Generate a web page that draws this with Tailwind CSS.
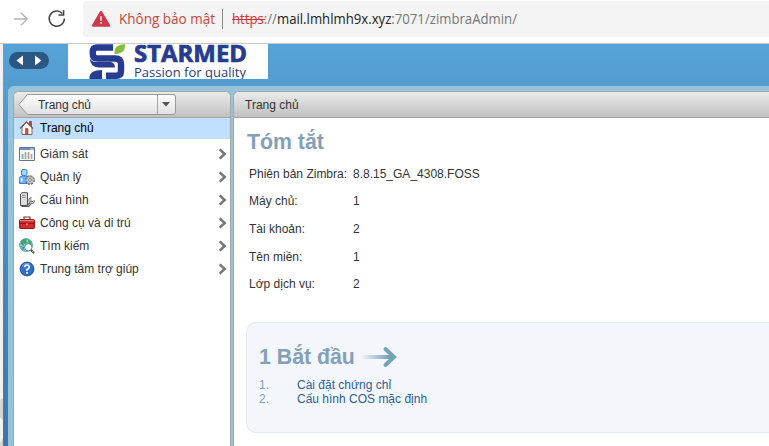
<!DOCTYPE html>
<html lang="vi">
<head>
<meta charset="utf-8">
<title>Zimbra Admin</title>
<script src="https://cdn.jsdelivr.net/npm/@tailwindcss/browser@4"></script>
</head>
<body class="w-[769px] h-[446px] overflow-hidden bg-white font-['Liberation_Sans',Arial,sans-serif] text-[12px] leading-[14px] text-[#333]">
<div class="flex h-[446px] flex-col overflow-hidden">
  <!-- Browser toolbar -->
  <header class="flex h-[44px] shrink-0 items-start border-b border-[#c9c9c9] bg-white">
    <svg class="mt-[9px] ml-[13px] h-5 w-5 shrink-0" viewBox="0 0 20 20" fill="none" stroke="#b3b3b3" stroke-width="1.3"><path d="M1 10H14.2M8 3.8L14.3 10L8 16.2"/></svg>
    <svg class="mt-[9px] ml-[14px] h-5 w-5 shrink-0" viewBox="0 0 20 20" fill="none" stroke="#444" stroke-width="1.5"><path d="M15.3 4.4A7.6 7.6 0 1 0 17.4 9.6M16.6 1V6H11.4"/></svg>
    <div class="mt-px ml-[16px] flex h-[36px] flex-1 items-center rounded-l bg-[#f4f4f4] font-['Open_Sans','Noto_Sans',sans-serif] text-[14px] leading-5 whitespace-nowrap">
      <svg class="ml-[8px] h-[18px] w-5 shrink-0" viewBox="0 0 20 18"><path d="M10 2L18 15.6H2Z" fill="#d0394b" stroke="#d0394b" stroke-width="2.4" stroke-linejoin="round"/><path d="M10 6.2V10.8M10 12.1V13.7" stroke="#fff" stroke-width="1.4"/></svg>
      <svg class="ml-[8px] h-[36px] w-[410px] shrink-0" viewBox="0 0 410 36" font-size="14.5">
        <text x="0" y="23" fill="#c74634" textLength="96" lengthAdjust="spacingAndGlyphs">Không bảo mật</text>
        <path d="M103.500 8V28" stroke="#8a8a8a"/>
        <text x="113" y="23" fill="#767676" textLength="285" lengthAdjust="spacingAndGlyphs"><tspan fill="#d13438">https</tspan>://<tspan fill="#222">mail.lmhlmh9x.xyz</tspan>:7071/zimbraAdmin/</text>
        <path d="M113 18.500H146" stroke="#d13438" stroke-width="1.2"/>
      </svg>
    </div>
  </header>

  <div class="flex min-h-0 flex-1">
    <div class="w-[3px] shrink-0 overflow-hidden bg-[#f1f1f1] pt-[353px]"><div class="h-[24px] w-[10px] -translate-x-px rounded-l-lg bg-[#d4d4d4]"></div><div class="mt-[16px] h-5 w-[10px] rounded-tl-lg bg-[#d4d4d4]"></div></div>
    <div class="flex min-w-0 flex-1 flex-col bg-linear-to-b from-[#56a3d6] to-[#4174a5]">
      <!-- Banner -->
      <div class="flex h-[42px] shrink-0 items-start bg-linear-to-b from-[#56a3d6] to-[#549cd0]">
        <div class="mt-[8px] ml-[6px] flex h-[17px] w-[40px] shrink-0 items-center justify-between rounded-full bg-[#2b5784] px-[7px]">
          <svg class="h-[11px] w-[7px]" viewBox="0 0 7 11"><path d="M7 .5V10.5L.5 5.5Z" fill="#fff"/></svg>
          <svg class="h-[11px] w-[7px]" viewBox="0 0 7 11"><path d="M0 .5V10.5L6.5 5.5Z" fill="#fff"/></svg>
        </div>
        <div class="ml-[19px] flex h-[35px] w-[200px] shrink-0 bg-white">
          <svg class="h-[35px] w-[66px] shrink-0" viewBox="0 0 66 35">
            <path d="M45 3.500H29Q24.800 3.500 24.800 8V10Q24.800 14.500 29.500 14.500H47Q53 14.500 53 20V27Q53 31.800 48 31.800H38" fill="none" stroke="#273c91" stroke-width="6.400"/>
            <path d="M21.600 13Q22 18 29 18H43Q47 19 47 23.500H31Q21.600 23 21.600 13Z" fill="#273c91"/>
            <path d="M34 26V35H21.500V33Q22 26 34 26Z" fill="#273c91"/>
            <path d="M57 .2V2Q57 10 46.500 10V8Q46.500 .2 57 .2Z" fill="#85be3c"/>
          </svg>
          <div class="flex flex-col whitespace-nowrap">
            <svg class="h-[20px] w-[116px] shrink-0" viewBox="0 0 116 20"><text x="0" y="17.500" font-family="Open Sans" font-weight="700" font-size="22.500" fill="#273c91" stroke="#273c91" stroke-width=".7" textLength="113" lengthAdjust="spacingAndGlyphs">STARMED</text></svg>
            <svg class="h-[15px] w-[116px] shrink-0" viewBox="0 0 116 15"><text x="0" y="12.500" font-family="Open Sans" font-size="12.500" fill="#303a80" textLength="112" lengthAdjust="spacingAndGlyphs">Passion for quality</text></svg>
          </div>
        </div>
      </div>

      <!-- Workspace -->
      <main class="ml-[5px] flex min-h-0 flex-1 gap-[2px] rounded-tl-md bg-[#98c4d9] pt-[5px] pl-[5px]">
        <nav class="w-[218px] shrink-0 overflow-hidden rounded-t-md border border-b-0 border-[#a5a5a5] bg-white">
          <div class="flex h-[26px] border-b border-[#a5a5a5] bg-linear-to-b from-[#ebebeb] to-[#c1c1c1]">
            <svg class="mt-[2px] ml-[4px] h-[22px] w-[159px]" viewBox="0 0 159 22">
              <defs><linearGradient id="button" x2="0" y2="1"><stop stop-color="#fff"/><stop offset="1" stop-color="#e0e0e0"/></linearGradient></defs>
              <path d="M.8 10.5L9.5 .5H155Q157.500 .5 157.500 3V18Q157.500 20.500 155 20.500H9.500Z" fill="url(#button)" stroke="#999"/>
              <path d="M139.500 1V20" stroke="#a5a5a5"/><path d="M144 8H152L148 12.500Z" fill="#555"/>
              <text x="20" y="15" font-size="12" fill="#333" textLength="53">Trang chủ</text>
            </svg>
          </div>
          <div class="flex h-[21px] items-center bg-[#c1dfff] pb-px pl-[5px] text-black">
            <svg class="h-4 w-4" viewBox="0 0 16 16"><path d="M10.500 1.500H12.500V6L10.500 4Z" fill="#c33b2c" stroke="#8b3c2c" stroke-width=".7"/><path d="M3 7V14.500H13V7L7.500 2Z" fill="#fff" stroke="#7d685a"/><path d="M1 8.500L7.500 2L14 8.500" fill="none" stroke="#795d4d" stroke-width="1.300"/><path d="M6.500 8.500H9V14.500H6.500Z" fill="#d34a3c" stroke="#84453b" stroke-width=".6"/></svg>
            <span class="ml-[5px]">Trang chủ</span>
          </div>
          <ul class="pt-[3px]">
            <li class="flex h-[23px] items-center pl-[5px]">
              <svg class="h-4 w-4" viewBox="0 0 16 16"><path d="M.5 1.500H15.500V14.500H.5Z" fill="#f5f8fb" stroke="#5a7595"/><path d="M1 2H15V4H1Z" fill="#6d90b8"/><path d="M11.500 3H14.500" stroke="#dce8f5"/><path d="M3.500 13V8" stroke="#8eb88f" stroke-width="2"/><path d="M6.500 13V6" stroke="#8cb0d6" stroke-width="1.700"/><path d="M9.500 13V6" stroke="#d29a78" stroke-width="1.700"/><path d="M12.500 13V8" stroke="#a6adc8" stroke-width="1.700"/></svg>
              <span class="ml-[5px] flex-1">Giám sát</span><svg class="mr-[3px] h-3 w-[9px]" viewBox="0 0 9 12"><path d="M1.700 1.300L6.700 6L1.700 10.700" fill="none" stroke="#777" stroke-width="2.500"/></svg>
            </li>
            <li class="flex h-[23px] items-center pl-[5px]">
              <svg class="h-4 w-4" viewBox="0 0 16 16"><rect x="2.500" y=".5" width="5.500" height="6" rx="1.500" fill="#a3d8ff" stroke="#2f82d4"/><path d="M.5 14.500V9.500Q.5 7 3 7H7Q9.500 7 9.500 9.500V14.500Z" fill="#6ab8fb" stroke="#2f82d4"/><path d="M2.500 9V12.500" stroke="#d8f1ff" stroke-width="1.800"/><circle cx="11" cy="11" r="4.200" fill="#ddd" stroke="#666" stroke-width="1.300" stroke-dasharray="2.100 1.200"/><circle cx="11" cy="11" r="3.300" fill="#ddd" stroke="#888" stroke-width=".7"/><circle cx="11" cy="11" r="1.400" fill="#fff" stroke="#555" stroke-width=".8"/></svg>
              <span class="ml-[5px] flex-1">Quản lý</span><svg class="mr-[3px] h-3 w-[9px]" viewBox="0 0 9 12"><path d="M1.700 1.300L6.700 6L1.700 10.700" fill="none" stroke="#777" stroke-width="2.500"/></svg>
            </li>
            <li class="flex h-[23px] items-center pl-[5px]">
              <svg class="h-4 w-4" viewBox="0 0 16 16"><path d="M1.500 2L3 .7H8.500V12.500L7 13.500H1.500Z" fill="#ddd" stroke="#4f4f4f"/><path d="M3 3.500H6.500M3 5.500H6.500" stroke="#8a8a8a"/><path d="M2.500 14.500H8" stroke="#555"/><path d="M9 13.800L12.500 10" stroke="#555" stroke-width="2.900" stroke-linecap="round"/><path d="M15 8.300A2.300 2.300 0 1 1 12.700 6.200" fill="none" stroke="#666" stroke-width="2"/><path d="M9 13.800L12.500 10M14.900 8.500A2.200 2.200 0 1 1 12.600 6.400" fill="none" stroke="#ddd" stroke-width=".9" stroke-linecap="round"/></svg>
              <span class="ml-[5px] flex-1">Cấu hình</span><svg class="mr-[3px] h-3 w-[9px]" viewBox="0 0 9 12"><path d="M1.700 1.300L6.700 6L1.700 10.700" fill="none" stroke="#777" stroke-width="2.500"/></svg>
            </li>
            <li class="flex h-[23px] items-center pl-[5px]">
              <svg class="h-4 w-4" viewBox="0 0 16 16"><path d="M5 4.500V2H11V4.500" fill="none" stroke="#574545" stroke-width="1.200"/><rect x=".5" y="4.500" width="15" height="9" rx="1" fill="#d42b2b" stroke="#8d1717"/><path d="M1 5.500H15" stroke="#f28b80"/><path d="M1 8.500H15" stroke="#951414"/><path d="M7.300 8H8.700V10.500H7.300Z" fill="#fff" stroke="#791010" stroke-width=".5"/></svg>
              <span class="ml-[5px] flex-1">Công cụ và di trú</span><svg class="mr-[3px] h-3 w-[9px]" viewBox="0 0 9 12"><path d="M1.700 1.300L6.700 6L1.700 10.700" fill="none" stroke="#777" stroke-width="2.500"/></svg>
            </li>
            <li class="flex h-[23px] items-center pl-[5px]">
              <svg class="h-4 w-4" viewBox="0 0 16 16"><circle cx="7" cy="7" r="6.300" fill="#7fd0f2" stroke="#4592b5"/><path d="M2 3Q5 0 8 1L7 3L9 5L5 6L5 8L2 6ZM9 1L13 5L11 6L9 4ZM2 8L5 9L5 12Q3 11 2 8Z" fill="#42a65d"/><path d="M12 12L15 15" stroke="#383e52" stroke-width="1.900"/><circle cx="9.300" cy="9.300" r="3.700" fill="#effaff" stroke="#607d92"/><path d="M13.300 13L14.500 14.200" stroke="#efba43" stroke-width="1.200"/></svg>
              <span class="ml-[5px] flex-1">Tìm kiếm</span><svg class="mr-[3px] h-3 w-[9px]" viewBox="0 0 9 12"><path d="M1.700 1.300L6.700 6L1.700 10.700" fill="none" stroke="#777" stroke-width="2.500"/></svg>
            </li>
            <li class="flex h-[23px] items-center pl-[5px]">
              <svg class="h-4 w-4" viewBox="0 0 16 16"><circle cx="8" cy="8" r="6.900" fill="#2d71cd" stroke="#173e93" stroke-width=".9"/><path d="M3 5Q5 2 10 2.500" fill="none" stroke="#72a4e7"/><path d="M5.700 6.200Q5.700 4 8 4T10.300 6.200Q10.300 7.300 8 8.600V9.700M8 11V12.700" fill="none" stroke="#fff" stroke-width="1.700"/></svg>
              <span class="ml-[5px] flex-1">Trung tâm trợ giúp</span><svg class="mr-[3px] h-3 w-[9px]" viewBox="0 0 9 12"><path d="M1.700 1.300L6.700 6L1.700 10.700" fill="none" stroke="#777" stroke-width="2.500"/></svg>
            </li>
          </ul>
        </nav>

        <section class="min-w-0 flex-1 overflow-hidden rounded-tl-md border border-r-0 border-b-0 border-[#a5a5a5] bg-white">
          <div class="flex h-[26px] items-center border-b border-[#a5a5a5] bg-linear-to-b from-[#ebebeb] to-[#c1c1c1] pl-[11px]">Trang chủ</div>
          <h1 class="mt-[11px] ml-[13px] text-[21.300px] leading-[26px] font-bold text-[#849fb8]">Tóm tắt</h1>
          <dl class="mt-[5px] ml-[15px] grid grid-cols-[104px_1fr] auto-rows-[27.600px] items-center whitespace-nowrap">
            <dt>Phiên bản Zimbra:</dt><dd>8.8.15_GA_4308.FOSS</dd>
            <dt>Máy chủ:</dt><dd>1</dd>
            <dt>Tài khoản:</dt><dd>2</dd>
            <dt>Tên miền:</dt><dd>1</dd>
            <dt>Lớp dịch vụ:</dt><dd>2</dd>
          </dl>
          <div class="mt-[24px] ml-[12px] h-[111px] rounded-l-[10px] border border-r-0 border-[#e2e9f1] bg-[#f3f6fb] pt-[21px] pl-[12px]">
            <div class="flex items-center">
              <h2 class="text-[21.300px] leading-[26px] font-bold whitespace-nowrap text-[#849fb8]">1 Bắt đầu</h2>
              <svg class="ml-[4px] h-[24px] w-[38px]" viewBox="0 0 38 24" fill="none"><defs><linearGradient id="arrow" gradientUnits="userSpaceOnUse" x1="2" y1="12" x2="30" y2="12"><stop stop-color="#75a3b5" stop-opacity="0"/><stop offset="1" stop-color="#75a3b5"/></linearGradient></defs><path d="M1 12H34" stroke="url(#arrow)" stroke-width="4"/><path d="M26.500 4L35 12L26.500 20" stroke="#75a3b5" stroke-width="4" stroke-linecap="round"/></svg>
            </div>
            <ol class="mt-[8px] text-[#2f5f96]">
              <li class="flex"><span class="w-[38px] text-[#849fb8]">1.</span>Cài đặt chứng chỉ</li>
              <li class="flex"><span class="w-[38px] text-[#849fb8]">2.</span>Cấu hình COS mặc định</li>
            </ol>
          </div>
        </section>
      </main>
    </div>
  </div>
</div>
</body>
</html>
